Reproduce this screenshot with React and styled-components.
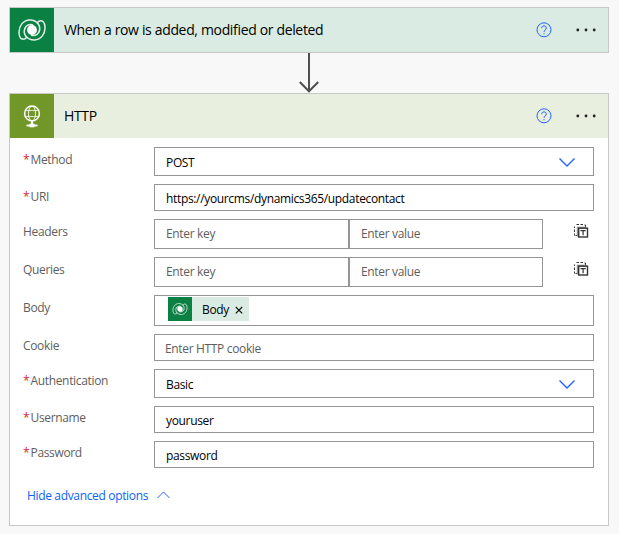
import React from "react";
import styled, { createGlobalStyle } from "styled-components";

const GlobalStyle = createGlobalStyle`
  * { box-sizing: border-box; }
  body {
    margin: 0;
    background: #f8f8f8;
    font-family: "Open Sans", "Noto Sans", sans-serif;
    font-size: 12px;
    letter-spacing: -0.34px;
    color: #000;
  }
`;

const Page = styled.main`
  width: 619px;
  height: 534px;
  padding: 7px 10px 8px 9px;
  display: flex;
  flex-direction: column;
  overflow: hidden;
`;

const Card = styled.section`
  width: 600px;
  height: ${(p) => p.$height}px;
  flex: none;
  border: 1px solid #c8c8c8;
  background: #fff;
`;

const CardHeader = styled.header`
  height: 44px;
  display: flex;
  align-items: center;
  background: ${(p) => p.$tint};
`;

const BrandTile = styled.div`
  width: 44px;
  height: 44px;
  display: grid;
  place-items: center;
  background: ${(p) => p.$color};
`;

const Title = styled.h2`
  flex: 1;
  margin: 0 0 0 10px;
  font-size: 14px;
  font-weight: 400;
  line-height: 20px;
`;

const IconButton = styled.button`
  display: flex;
  padding: 0;
  border: 0;
  background: none;
  margin-right: ${(p) => p.$gap || 0}px;
`;

const Connector = styled.div`
  height: 40px;
  display: flex;
  justify-content: center;
`;

const Form = styled.div`
  padding: 9px 14px 0 13px;
  display: flex;
  flex-direction: column;
  gap: 8px;
`;

const Row = styled.div`
  display: flex;
  height: ${(p) => p.$height}px;
`;

const Label = styled.label`
  width: 131px;
  height: 26px;
  line-height: ${(p) => p.$line || 26}px;
  color: #605e5c;
  white-space: nowrap;
`;

const Star = styled.span`
  display: inline-block;
  width: 7.5px;
  color: #e0202c;
  letter-spacing: 0;
`;

const Field = styled.div`
  width: ${(p) => p.$width || 440}px;
  height: 100%;
  display: flex;
  align-items: center;
  justify-content: space-between;
  padding: ${(p) => (p.$raised ? 0 : 1)}px 18px ${(p) => (p.$raised ? 1 : 0)}px ${(p) => p.$indent || 11}px;
  border: 1px solid #979593;
  background: #fff;
  color: ${(p) => (p.$muted ? "#605e5c" : "#000")};
  white-space: nowrap;
`;

const ModeButton = styled(IconButton)`
  align-self: flex-start;
  margin: 5px 0 0 31px;
`;

const Token = styled.span`
  display: flex;
  align-items: center;
  width: 81px;
  height: 24px;
  margin: -4px 0 0 2px;
  background: #daebe3;
`;

const TokenTile = styled.span`
  width: 24px;
  height: 24px;
  display: grid;
  place-items: center;
  background: #0b8043;
`;

const TokenText = styled.span`
  width: 33px;
  margin-left: 10px;
  padding-top: 1px;
`;

const AdvancedLink = styled.a`
  display: flex;
  align-items: center;
  gap: 9px;
  margin: 10px 0 0 4px;
  height: 18px;
  color: #0b62f5;
`;

const Dataverse = ({ width, height }) => (
  <svg width={width} height={height} viewBox="0 0 28 22" fill="none" stroke="#fff">
    <g strokeWidth="1.500" strokeLinejoin="round" strokeLinecap="round" opacity=".88">
      <path d="M19.800 4.200C17.500 1.800 14.500.9 11.500 1C5 1.300 1 7 1 13C1 17.600 2.600 20.200 5.200 20.200C6.800 20.200 7.800 19.500 8.800 18.300C6.200 15.500 5.600 12.300 7 9.200" />
      <path d="M8.200 17.800C10.500 20.200 13.500 21.100 16.500 21C23 20.700 27 15 27 9C27 4.400 25.400 1.800 22.800 1.800C21.200 1.800 20.200 2.500 19.200 3.700C21.800 6.500 22.400 9.700 21 12.800" />
      <path d="M7 9.200C8.600 6.200 11.500 5.200 14.500 5.800M21 12.800C19.400 15.800 16.500 16.800 13.500 16.200" />
    </g>
    <circle cx="14" cy="11" r="4.900" fill="#fff" stroke="none" />
  </svg>
);

const Globe = () => (
  <svg width="18" height="23" viewBox="0 0 18 23" fill="none" stroke="#fff">
    <circle cx="9" cy="8.500" r="7.400" strokeWidth="1.500" />
    <ellipse cx="9" cy="8.500" rx="3.500" ry="7.400" strokeWidth=".9" />
    <path d="M2.500 5.500H15.500M2.500 11.500H15.500" strokeWidth=".9" strokeOpacity=".85" />
    <path d="M9 16V20" strokeWidth="2" />
    <path d="M3.500 20.500H14.500" strokeWidth="1.800" />
    <path d="M6.500 20.500H11.500" strokeWidth="3.600" />
  </svg>
);

const Help = () => (
  <svg width="16" height="16" viewBox="0 0 16 16" fill="none" stroke="#2463ff">
    <circle cx="8" cy="7.800" r="7" strokeWidth="1" />
    <path d="M5.700 6.200C5.700 4.700 6.600 3.900 8 3.900S10.300 4.700 10.300 6C10.300 7.600 8.050 7.900 8.050 9.900" />
    <path d="M7.500 11.700H8.600" strokeWidth="1.100" />
  </svg>
);

const Dots = () => (
  <svg width="20" height="4" viewBox="0 0 20 4" fill="#222">
    <circle cx="1.800" cy="2" r="1.400" />
    <circle cx="10" cy="2" r="1.400" />
    <circle cx="18.200" cy="2" r="1.400" />
  </svg>
);

const Arrow = () => (
  <svg width="22" height="40" viewBox="0 0 22 40" fill="none" stroke="#4f4f4f" strokeWidth="2">
    <path d="M11 0V38.500M1.800 29L11 38.300L20.200 29" />
  </svg>
);

const Chevron = () => (
  <svg width="16" height="9" viewBox="0 0 16 9" fill="none" stroke="#2463ff" strokeWidth="1.400">
    <path d="M.5.500L8 8L15.500.500" />
  </svg>
);

const ChevronUp = () => (
  <svg width="13" height="8" viewBox="0 0 13 8" fill="none" stroke="#2463ff" strokeWidth="1">
    <path d="M.5 7L6.500 1L12.500 7" />
  </svg>
);

const TextMode = () => (
  <svg width="15" height="15" viewBox="0 0 15 15" fill="none" stroke="#333">
    <path d="M2.500.500H5M6.500.500H9M10.500 1H11.500V3M.5 2.500V4M.5 5.500V8M.5 9.500V11.500M1.500 11.500H3" />
    <path d="M3.500 12.500V3.500H12.500" stroke="#8f8f8f" strokeWidth="1.400" />
    <rect x="4.700" y="4.200" width="8.800" height="8.800" fill="#fff" strokeWidth="1.400" />
    <path d="M6.500 6.700H11.700M9.100 6.700V11.300" strokeWidth="1.200" />
  </svg>
);

const Cross = () => (
  <svg width="8" height="9" viewBox="0 0 8 9" stroke="#111" strokeWidth="1.200">
    <path d="M.8 2L7.200 8.400M7.200 2L.8 8.400" />
  </svg>
);

const Header = ({ tint, color, icon, title }) => (
  <CardHeader $tint={tint}>
    <BrandTile $color={color}>{icon}</BrandTile>
    <Title>{title}</Title>
    <IconButton $gap={24} aria-label="Help"><Help /></IconButton>
    <IconButton $gap={12} aria-label="More"><Dots /></IconButton>
  </CardHeader>
);

const FormRow = ({ label, required, line, height, children }) => (
  <Row $height={height}>
    <Label $line={line}>
      {required && <Star>*</Star>}
      {label}
    </Label>
    {children}
  </Row>
);

const KeyValue = () => (
  <>
    <Field $width={195} $muted $raised>Enter key</Field>
    <Field $width={194} $muted $raised>Enter value</Field>
    <ModeButton aria-label="Switch to text mode"><TextMode /></ModeButton>
  </>
);

export default function App() {
  return (
    <>
      <GlobalStyle />
      <Page>
        <Card $height={46}>
          <Header
            tint="#daebe3"
            color="#0b8043"
            icon={<Dataverse width={28} height={22} />}
            title="When a row is added, modified or deleted"
          />
        </Card>
        <Connector><Arrow /></Connector>
        <Card $height={433}>
          <Header tint="#e8efdf" color="#709727" icon={<Globe />} title="HTTP" />
          <Form>
            <FormRow label="Method" required height={29}>
              <Field>POST<Chevron /></Field>
            </FormRow>
            <FormRow label="URI" required height={27}>
              <Field>https://yourcms/dynamics365/updatecontact</Field>
            </FormRow>
            <FormRow label="Headers" height={30}><KeyValue /></FormRow>
            <FormRow label="Queries" height={30}><KeyValue /></FormRow>
            <FormRow label="Body" height={31}>
              <Field>
                <Token>
                  <TokenTile><Dataverse width={16} height={12} /></TokenTile>
                  <TokenText>Body</TokenText>
                  <Cross />
                </Token>
              </Field>
            </FormRow>
            <FormRow label="Cookie" height={27} line={24}>
              <Field $muted $indent={10}>Enter HTTP cookie</Field>
            </FormRow>
            <FormRow label="Authentication" required height={29} line={24}>
              <Field>Basic<Chevron /></Field>
            </FormRow>
            <FormRow label="Username" required height={27} line={24}>
              <Field>youruser</Field>
            </FormRow>
            <FormRow label="Password" required height={27} line={24}>
              <Field>password</Field>
            </FormRow>
            <AdvancedLink>Hide advanced options<ChevronUp /></AdvancedLink>
          </Form>
        </Card>
      </Page>
    </>
  );
}
